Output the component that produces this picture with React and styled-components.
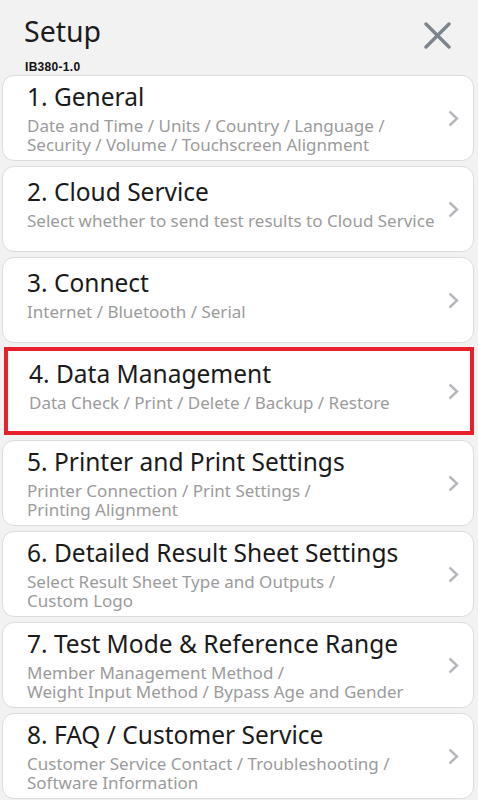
import React from 'react'
import styled, { createGlobalStyle } from 'styled-components'

const GlobalStyle = createGlobalStyle`
    html, body {
        margin: 0;
        padding: 0;
        background: #f2f2f2;
    }
    body {
        font-family: "Noto Sans", "Open Sans", sans-serif;
        width: 478px;
        height: 800px;
        overflow: hidden;
    }
`

const menu = [
    { title: '1. General', lines: ['Date and Time / Units / Country / Language /', 'Security / Volume / Touchscreen Alignment'] },
    { title: '2. Cloud Service', lines: ['Select whether to send test results to Cloud Service'] },
    { title: '3. Connect', lines: ['Internet / Bluetooth / Serial'] },
    { title: '4. Data Management', lines: ['Data Check / Print / Delete / Backup / Restore'], selected: true },
    { title: '5. Printer and Print Settings', lines: ['Printer Connection / Print Settings /', 'Printing Alignment'] },
    { title: '6. Detailed Result Sheet Settings', lines: ['Select Result Sheet Type and Outputs /', 'Custom Logo'] },
    { title: '7. Test Mode & Reference Range', lines: ['Member Management Method /', 'Weight Input Method / Bypass Age and Gender'] },
    { title: '8. FAQ / Customer Service', lines: ['Customer Service Contact / Troubleshooting /', 'Software Information'] },
]

export default function App() {
    return (
        <Page>
            <GlobalStyle />
            <Header>
                <TitleRow>
                    <PageTitle>Setup</PageTitle>
                    <CloseButton aria-label="close">
                        <svg width="27" height="27" viewBox="0 0 27 27">
                            <path d="M2 2 L25 25 M25 2 L2 25" stroke="#7c858e" strokeWidth="3.4" strokeLinecap="round" fill="none" />
                        </svg>
                    </CloseButton>
                </TitleRow>
                <Version>IB380-1.0</Version>
            </Header>
            <MenuList>
                {menu.map((item) => (
                    <MenuCard key={item.title} $selected={item.selected}>
                        <TextBlock>
                            <ItemTitle>{item.title}</ItemTitle>
                            <ItemDesc>
                                {item.lines.map((l) => (
                                    <span key={l}>{l}</span>
                                ))}
                            </ItemDesc>
                        </TextBlock>
                        <Chevron width="13" height="17" viewBox="0 0 13 17">
                            <polyline points="2.5,1.5 10,8.5 2.5,15.5" fill="none" stroke="#b4b8bc" strokeWidth="2.4" />
                        </Chevron>
                    </MenuCard>
                ))}
            </MenuList>
        </Page>
    )
}

const Page = styled.div`
    width: 478px;
    height: 800px;
    background: #f2f2f2;
    box-sizing: border-box;
`

const Header = styled.div`
    padding: 15px 0 0 24px;
    height: 75px;
    box-sizing: border-box;
`

const TitleRow = styled.div`
    display: flex;
    justify-content: space-between;
    align-items: flex-start;
    padding-right: 27px;
`

const PageTitle = styled.h1`
    margin: 0;
    font-size: 28.5px;
    line-height: 32px;
    font-weight: 400;
    color: #1c1c1c;
`

const CloseButton = styled.div`
    margin-top: 7px;
    width: 27px;
    height: 27px;
    display: flex;
`

const Version = styled.div`
    margin-top: 11px;
    margin-left: 1px;
    font-family: "Liberation Sans", Arial, sans-serif;
    font-weight: 700;
    font-size: 12px;
    line-height: 14px;
    letter-spacing: 0.3px;
    color: #111;
`

const MenuList = styled.div`
    display: flex;
    flex-direction: column;
    gap: 5px;
    padding: 0 4px 0 2px;
`

const MenuCard = styled.div`
    display: flex;
    align-items: center;
    justify-content: space-between;
    height: ${(p) => (p.$selected ? '88px' : '86px')};
    margin: ${(p) => (p.$selected ? '-1px 0 0 2px' : '0')};
    box-sizing: border-box;
    background: #fff;
    border: ${(p) => (p.$selected ? '4px solid #e8202b' : '1px solid #dcdcdc')};
    border-radius: ${(p) => (p.$selected ? '0' : '12px')};
    padding: ${(p) => (p.$selected ? '0 10px 0 21px' : '0 13px 0 24px')};
`

const TextBlock = styled.div`
    display: flex;
    flex-direction: column;
    min-height: 64px;
`

const ItemTitle = styled.div`
    font-size: 24.5px;
    line-height: 30px;
    color: #1a1a1a;
    white-space: nowrap;
`

const ItemDesc = styled.div`
    margin-top: 4px;
    display: flex;
    flex-direction: column;
    font-size: 17px;
    line-height: 19px;
    color: #9b9b9b;
    white-space: nowrap;
`

const Chevron = styled.svg`
    flex-shrink: 0;
`
